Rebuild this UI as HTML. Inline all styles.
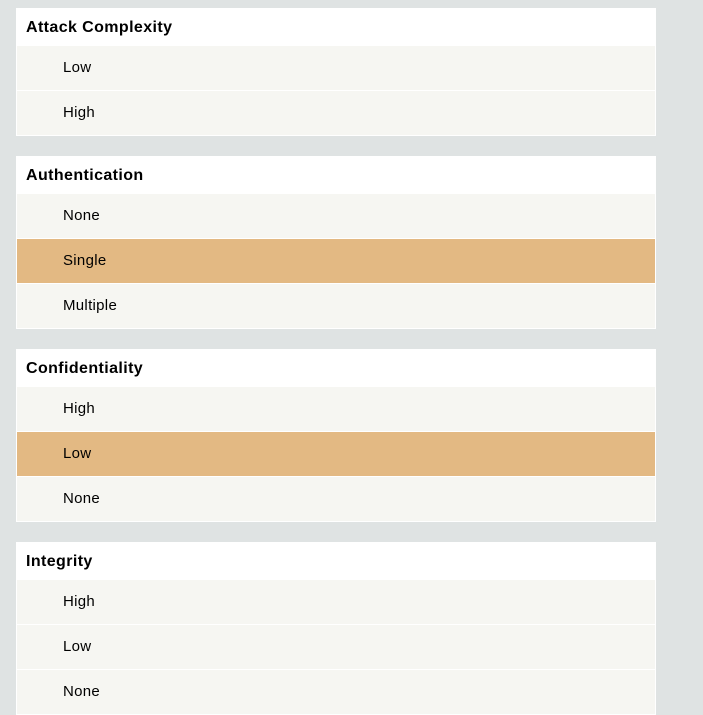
<!DOCTYPE html>
<html><head><style>
body{margin:0;background:#dfe3e3;width:703px;height:671px;overflow:hidden;font-family:"Liberation Sans",Arial,sans-serif;}
.p{position:absolute;left:16px;width:638px;background:#fff;border:1px solid #fff;}
.h{height:37px;line-height:37px;padding-left:9px;font-weight:bold;font-size:16px;letter-spacing:0.4px;color:#000;}
.r{height:44px;line-height:44px;padding-left:46px;font-size:15px;letter-spacing:0.3px;background:#f6f6f2;color:#000;}
.r+.r{margin-top:1px;}
.s{background:#e3b983;}
</style></head><body>
<div class="p" style="top:8px"><div class="h">Attack Complexity</div><div class="r">Low</div><div class="r">High</div></div>
<div class="p" style="top:156px"><div class="h">Authentication</div><div class="r">None</div><div class="r s">Single</div><div class="r">Multiple</div></div>
<div class="p" style="top:349px"><div class="h">Confidentiality</div><div class="r">High</div><div class="r s">Low</div><div class="r">None</div></div>
<div class="p" style="top:542px"><div class="h">Integrity</div><div class="r">High</div><div class="r">Low</div><div class="r">None</div></div>
</body></html>
